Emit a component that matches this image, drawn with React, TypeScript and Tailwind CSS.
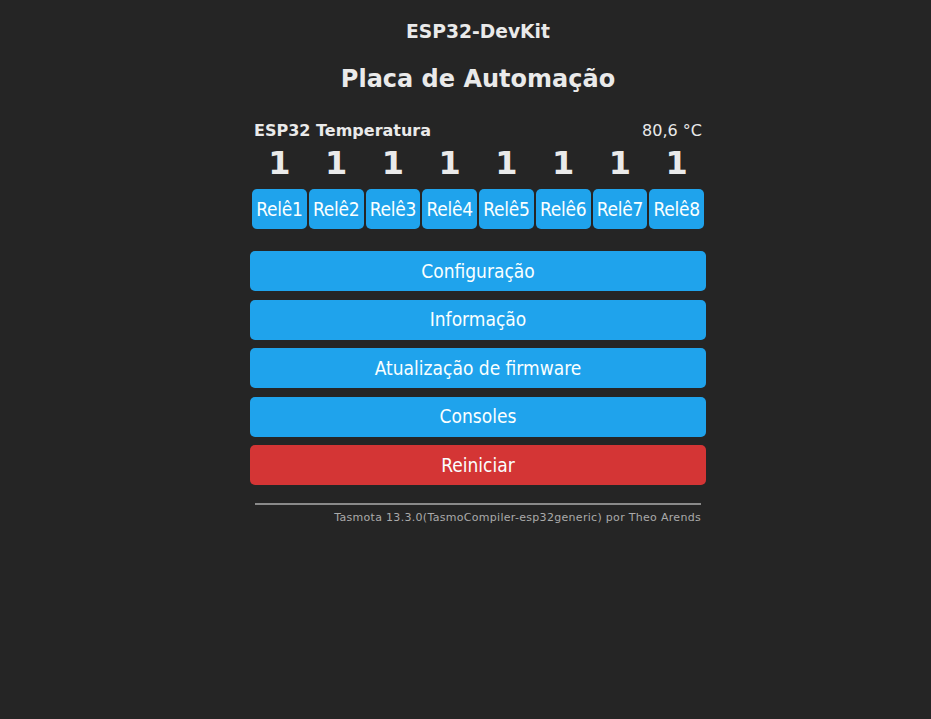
const relays = [1, 2, 3, 4, 5, 6, 7, 8];

const menu = [
  { label: 'Configuração', red: false },
  { label: 'Informação', red: false },
  { label: 'Atualização de firmware', red: false },
  { label: 'Consoles', red: false },
  { label: 'Reiniciar', red: true },
];

export default function App() {
  return (
    <div className="min-h-screen w-full bg-[#252525] text-[#eaeaea] font-['DejaVu_Sans',Verdana,sans-serif] flex justify-center pl-[25px]">
      <div className="w-[456px] flex flex-col">
        {/* Header */}
        <div className="text-center pt-[21px]">
          <h3 className="text-[18.7px] font-bold leading-[22px]">ESP32-DevKit</h3>
          <h2 className="text-[24px] font-bold leading-[28px] mt-[22px]">Placa de Automação</h2>
        </div>

        {/* Sensor */}
        <div className="flex justify-between items-center px-[4px] mt-[28px] text-[16px] leading-[20px]">
          <span className="font-bold">ESP32 Temperatura</span>
          <span>80,6 °C</span>
        </div>

        {/* Relay states */}
        <div className="grid grid-cols-8 gap-[2px] px-[2px] mt-[3px]">
          {relays.map((r) => (
            <div key={r} className="text-center font-bold text-[32px] leading-[38px]">
              1
            </div>
          ))}
        </div>

        {/* Relay buttons */}
        <div className="grid grid-cols-8 gap-[2px] px-[2px] mt-[7px]">
          {relays.map((r) => (
            <button
              key={r}
              className="h-[40px] rounded-[5px] bg-[#1fa3ec] text-[#faffff] text-[19px] font-['DejaVu_Sans_Condensed','DejaVu_Sans',sans-serif] tracking-[-0.3px]"
            >
              Relê{r}
            </button>
          ))}
        </div>

        {/* Menu */}
        <div className="flex flex-col gap-[8.5px] mt-[22px]">
          {menu.map((m) => (
            <button
              key={m.label}
              className={
                'h-[40px] w-full rounded-[5px] text-[#faffff] text-[19px] font-[\'DejaVu_Sans_Condensed\',\'DejaVu_Sans\',sans-serif] ' +
                (m.red ? 'bg-[#d43535]' : 'bg-[#1fa3ec]')
              }
            >
              {m.label}
            </button>
          ))}
        </div>

        {/* Footer */}
        <div className="px-[5px] mt-[18px] text-right">
          <hr className="border-0 h-[2px] bg-[#8a8a8a]" />
          <div className="text-[11px] leading-[14px] tracking-[0.3px] text-[#aaaaaa] mt-[6px]">
            Tasmota 13.3.0(TasmoCompiler-esp32generic) por Theo Arends
          </div>
        </div>
      </div>
    </div>
  );
}
